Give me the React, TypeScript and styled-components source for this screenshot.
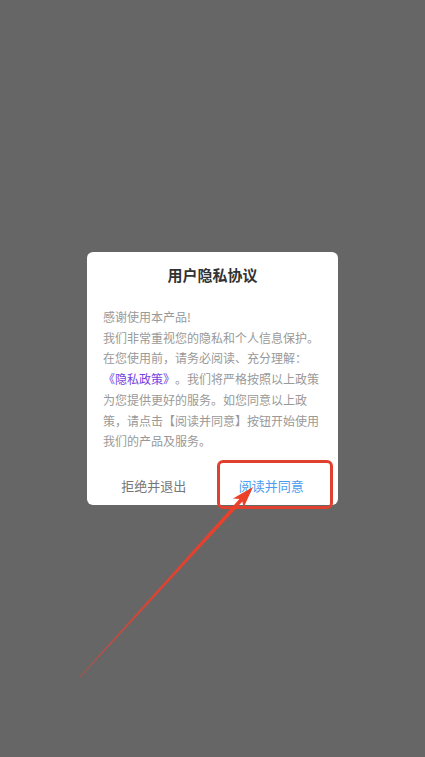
import styled, { createGlobalStyle } from "styled-components";

const GlobalStyle = createGlobalStyle`
  html, body {
    margin: 0;
    padding: 0;
    background: #666666;
  }
  body {
    font-family: "Noto Sans CJK SC", "Noto Sans", sans-serif;
  }
`;

export default function App() {
  return (
    <Screen>
      <GlobalStyle />
      <Dialog>
        <Title>用户隐私协议</Title>

        <Body>
          感谢使用本产品!
          <br />
          我们非常重视您的隐私和个人信息保护。在您使用前，请务必阅读、充分理解：
          <PolicyLink>《隐私政策》</PolicyLink>。我们将严格按照以上政策为您提供更好的服务。如您同意以上政策，请点击【阅读并同意】按钮开始使用我们的产品及服务。
        </Body>

        <Actions>
          <ActionButton>拒绝并退出</ActionButton>
          <ActionButton primary>
            阅读并同意
            <Highlight />
          </ActionButton>
        </Actions>
      </Dialog>

      <Arrow viewBox="0 0 425 757" width="425" height="757">
        <defs>
          <linearGradient id="arrowFade" x1="80" y1="677" x2="253" y2="487" gradientUnits="userSpaceOnUse">
            <stop offset="0" stopColor="#d9473a" stopOpacity="0.55" />
            <stop offset="0.4" stopColor="#e3412e" stopOpacity="0.95" />
            <stop offset="1" stopColor="#ee3f28" />
          </linearGradient>
        </defs>
        <polygon
          points="79.6,676.7 239.4,499.0 233.0,498.6 253,487 243.4,508.0 242.4,501.6 80.4,677.3"
          fill="url(#arrowFade)"
        />
      </Arrow>
    </Screen>
  );
}

const Screen = styled.div`
  position: relative;
  width: 425px;
  height: 757px;
  background: #666666;

  display: flex;
  align-items: center;
  justify-content: center;
`;

const Dialog = styled.div`
  width: 251px;
  background: #ffffff;
  border-radius: 6px;

  display: flex;
  flex-direction: column;
`;

const Title = styled.div`
  padding-top: 14px;
  text-align: center;
  font-size: 15px;
  line-height: 18px;
  font-weight: 700;
  color: #333333;
`;

const Body = styled.p`
  margin: 23px 0 13px;
  padding: 0 16px;
  font-size: 12px;
  line-height: 20.8px;
  color: #999999;
  word-break: break-all;
  text-spacing-trim: space-all;
`;

const PolicyLink = styled.span`
  color: #7442e0;
`;

const Actions = styled.div`
  display: grid;
  grid-template-columns: 1fr 1fr;
  height: 40px;
  padding: 0 8px;
`;

const ActionButton = styled.div<{ primary?: boolean }>`
  position: relative;
  display: flex;
  align-items: center;
  justify-content: center;
  font-size: 13px;
  color: ${({ primary }) => (primary ? "#4a9cf0" : "#777777")};
`;

const Highlight = styled.span`
  position: absolute;
  top: -5px;
  bottom: -4px;
  left: 4px;
  right: -3px;
  border: 3px solid #e0412f;
  border-radius: 6px;
`;

const Arrow = styled.svg`
  position: absolute;
  top: 0;
  left: 0;
  pointer-events: none;
`;
